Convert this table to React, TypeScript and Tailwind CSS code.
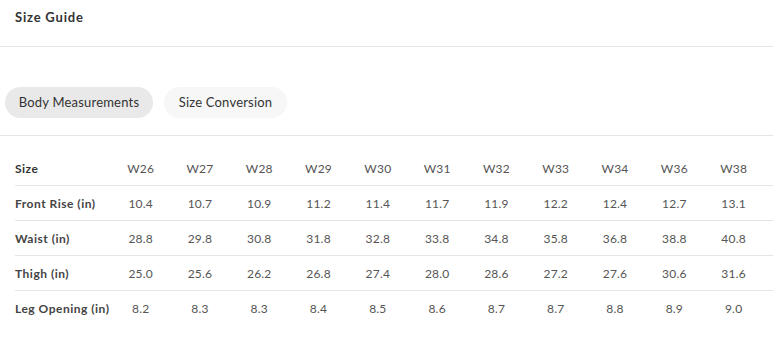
import React from "react";

const sizes = ["W26","W27","W28","W29","W30","W31","W32","W33","W34","W36","W38"];
const rows: { label: string; values: string[] }[] = [
  { label: "Front Rise (in)", values: ["10.4","10.7","10.9","11.2","11.4","11.7","11.9","12.2","12.4","12.7","13.1"] },
  { label: "Waist (in)", values: ["28.8","29.8","30.8","31.8","32.8","33.8","34.8","35.8","36.8","38.8","40.8"] },
  { label: "Thigh (in)", values: ["25.0","25.6","26.2","26.8","27.4","28.0","28.6","27.2","27.6","30.6","31.6"] },
  { label: "Leg Opening (in)", values: ["8.2","8.3","8.3","8.4","8.5","8.6","8.7","8.7","8.8","8.9","9.0"] },
];

export default function App() {
  return (
    <div className="w-[773px] h-[346px] bg-white overflow-hidden" style={{ fontFamily: "Lato, 'Liberation Sans', sans-serif" }}>
      <div className="h-[47px] border-b border-[#e5e5e5] pl-[15px] pt-[8px]">
        <h2 className="text-[13px] font-bold text-[#333] leading-[18px] tracking-[0.8px]">Size Guide</h2>
      </div>
      <div className="h-[89px] border-b border-[#e5e5e5] flex items-end gap-[11px] pl-[5px] pb-[17px]">
        <button className="h-[31px] w-[148px] rounded-full bg-[#e9e9e9] text-[13px] text-[#333] tracking-[0.2px]">Body Measurements</button>
        <button className="h-[31px] w-[123px] rounded-full bg-[#f7f7f7] text-[13px] text-[#333] tracking-[0.2px]">Size Conversion</button>
      </div>
      <div className="pl-[15px] pt-[15px]">
        <div className="grid grid-cols-[96px_repeat(11,59.3px)_1fr] h-[35px] items-center border-b border-[#e5e5e5] text-[12px] pt-[1px]">
          <div className="font-bold text-[#333] tracking-[0.5px]">Size</div>
          {sizes.map((s) => (
            <div key={s} className="text-center text-[#555] tracking-[0.2px]">{s}</div>
          ))}
          <div />
        </div>
        {rows.map((r, i) => (
          <div
            key={r.label}
            className={
              i < rows.length - 1
                ? "grid grid-cols-[96px_repeat(11,59.3px)_1fr] h-[35px] items-center border-b border-[#e5e5e5] text-[12px] pt-[1px]"
                : "grid grid-cols-[96px_repeat(11,59.3px)_1fr] h-[35px] items-center text-[12px] pt-[1px]"
            }
          >
            <div className="font-bold text-[#444] whitespace-nowrap tracking-[0.5px]">{r.label}</div>
            {r.values.map((v, j) => (
              <div key={j} className="text-center text-[#555] tracking-[0.2px]">{v}</div>
            ))}
            <div />
          </div>
        ))}
      </div>
    </div>
  );
}
